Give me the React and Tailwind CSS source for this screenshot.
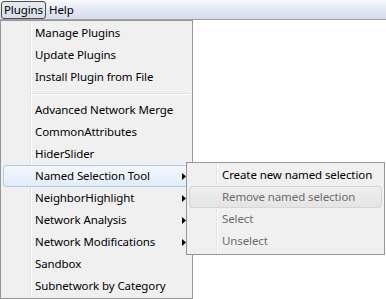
import React from 'react';

const mainItems = [
  { label: 'Manage Plugins' },
  { label: 'Update Plugins' },
  { label: 'Install Plugin from File' },
  { separator: true },
  { label: 'Advanced Network Merge' },
  { label: 'CommonAttributes' },
  { label: 'HiderSlider' },
  { label: 'Named Selection Tool', sub: true, active: true },
  { label: 'NeighborHighlight', sub: true },
  { label: 'Network Analysis', sub: true },
  { label: 'Network Modifications', sub: true },
  { label: 'Sandbox' },
  { label: 'Subnetwork by Category' },
];

const subItems = [
  { label: 'Create new named selection' },
  { label: 'Remove named selection', disabled: true, hover: true },
  { label: 'Select', disabled: true },
  { label: 'Unselect', disabled: true },
];

const Arrow = () => (
  <svg width="4" height="7" viewBox="0 0 4 7" className="ml-auto mr-[1px] shrink-0">
    <path d="M0 0 L4 3.5 L0 7 Z" fill="#000" />
  </svg>
);

const App = () => {
  return (
    <div
      className="relative w-[386px] h-[299px] bg-white overflow-hidden text-[11.5px] tracking-[-0.1px] text-black whitespace-nowrap"
      style={{ fontFamily: '"Noto Sans", "Open Sans", sans-serif' }}
    >
      {/* Menu bar */}
      <div className="h-[20px] flex items-center border-b border-[#a0a0a0] bg-gradient-to-b from-[#f9fafd] via-[#e4e8f4] to-[#d6dbee]">
        <div className="ml-[1px] h-[18px] px-[2px] flex items-center rounded-[3px] border border-[#4d4d4d] bg-gradient-to-b from-[#e8eaf0] to-[#d8dcea]">
          Plugins
        </div>
        <div className="ml-[3px] flex items-center">Help</div>
      </div>

      {/* Plugins dropdown */}
      <div className="absolute left-0 top-[20px] w-[193px] h-[279px] border border-[#979797] bg-[#f0f0f0] py-[1px]">
        <div className="absolute left-[29px] top-0 bottom-0 w-[2px] border-l border-[#e2e3e3] bg-white" />
        {mainItems.map((it, i) =>
          it.separator ? (
            <div key={i} className="relative h-[11px] flex items-center pl-[30px] pr-[2px]">
              <div className="w-full h-[2px] border-t border-[#e0e0e0] bg-white" />
            </div>
          ) : (
            <div
              key={i}
              className={`relative h-[22px] mx-[2px] pl-[31px] pr-[2px] flex items-center rounded-[3px] border ${
                it.active
                  ? 'border-[#aeccec] bg-gradient-to-b from-[#f4f8fd] to-[#e1ebf9]'
                  : 'border-transparent'
              }`}
            >
              <span>{it.label}</span>
              {it.sub && <Arrow />}
            </div>
          )
        )}
      </div>

      {/* Named Selection Tool submenu */}
      <div className="absolute left-[186px] top-[162px] w-[199px] h-[93px] border border-[#979797] bg-[#f0f0f0] py-[1px]">
        <div className="absolute left-[29px] top-0 bottom-0 w-[2px] border-l border-[#e2e3e3] bg-white" />
        {subItems.map((it, i) => (
          <div
            key={i}
            className={`relative h-[22px] mx-[2px] pl-[32px] flex items-center rounded-[3px] border ${
              it.hover
                ? 'border-[#d6d6d6] bg-gradient-to-b from-[#eeeeee] to-[#e4e4e4]'
                : 'border-transparent'
            } ${it.disabled ? 'text-[#6d6d6d]' : 'text-black'}`}
          >
            {it.label}
          </div>
        ))}
      </div>
    </div>
  );
};

export default App;
